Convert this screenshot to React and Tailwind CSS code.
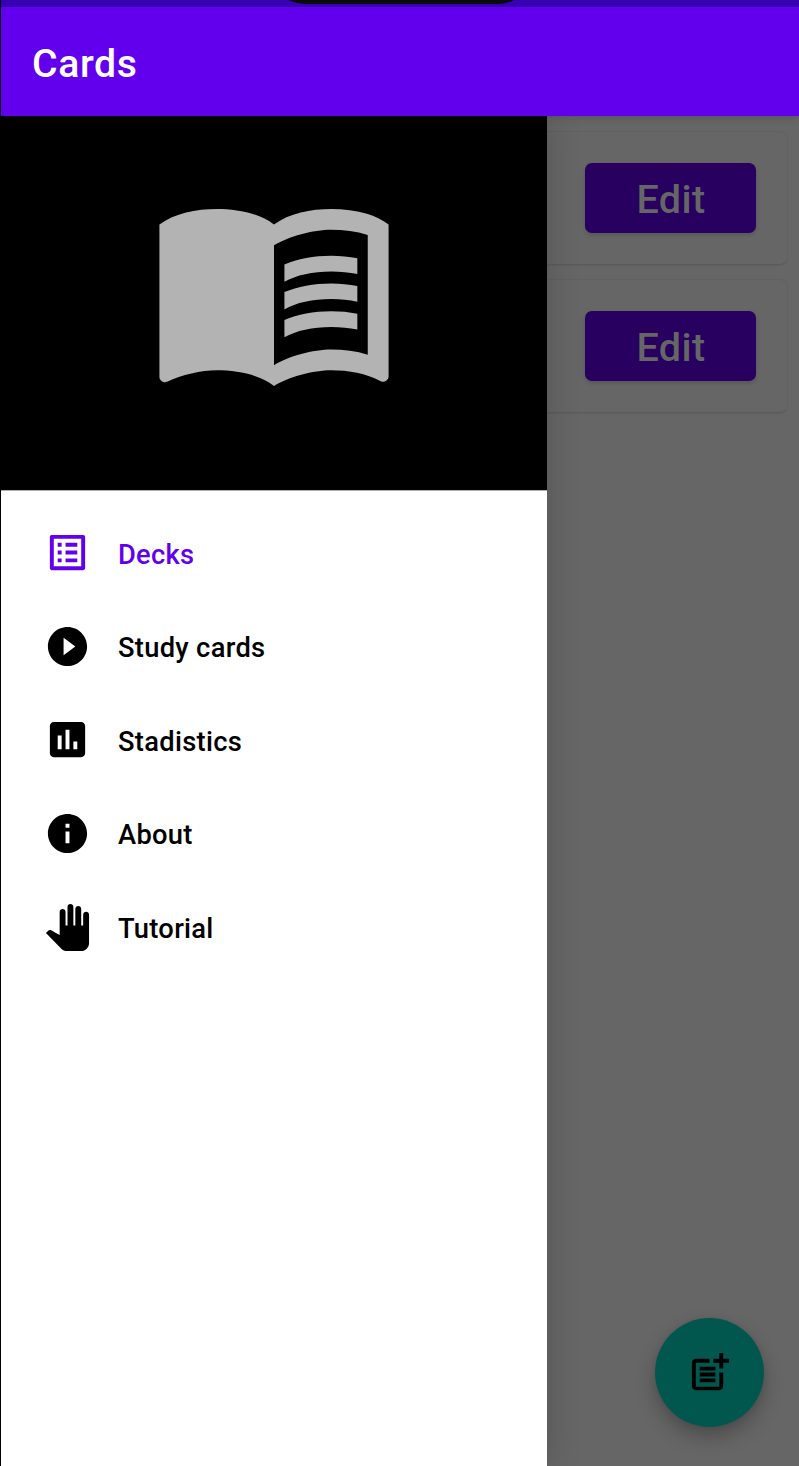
import { MdListAlt, MdPlayCircleFilled, MdAssessment, MdInfo, MdPanTool, MdPostAdd } from "react-icons/md";

const items = [
  { label: "Decks", Icon: MdListAlt, active: true },
  { label: "Study cards", Icon: MdPlayCircleFilled },
  { label: "Stadistics", Icon: MdAssessment },
  { label: "About", Icon: MdInfo },
  { label: "Tutorial", Icon: MdPanTool },
];

function BookIcon() {
  return (
    <svg viewBox="0 0 24 24" className="size-[250px] fill-[#b3b3b3]">
      <path d="M21 5c-1.11-.35-2.33-.5-3.5-.5-1.95 0-4.05.4-5.5 1.5-1.45-1.1-3.55-1.5-5.5-1.5S2.45 4.9 1 6v14.65c0 .25.25.5.5.5.1 0 .15-.05.25-.05C3.1 20.45 5.05 20 6.5 20c1.95 0 4.05.4 5.5 1.5 1.35-.85 3.8-1.5 5.5-1.5 1.65 0 3.35.3 4.75 1.05.1.05.15.05.25.05.25 0 .5-.25.5-.5V6c-.6-.45-1.25-.75-2-1zm0 13.5c-1.1-.35-2.3-.5-3.5-.5-1.7 0-4.15.65-5.5 1.5V8c1.35-.85 3.8-1.5 5.5-1.5 1.2 0 2.4.15 3.5.5v11.5z" />
      <path d="M17.5 10.5c.88 0 1.73.09 2.5.26V9.24c-.79-.15-1.64-.24-2.5-.24-1.7 0-3.24.29-4.5.83v1.66c1.13-.64 2.7-.99 4.5-.99zM13 12.49v1.66c1.13-.64 2.7-.99 4.5-.99.88 0 1.73.09 2.5.26V11.9c-.79-.15-1.64-.24-2.5-.24-1.7 0-3.24.3-4.5.83zM17.5 14.33c-1.7 0-3.24.29-4.5.83v1.66c1.13-.64 2.7-.99 4.5-.99.88 0 1.73.09 2.5.26v-1.52c-.79-.16-1.64-.24-2.5-.24z" />
    </svg>
  );
}

function DeckCard() {
  return (
    <div className="flex h-[134px] items-center justify-end rounded-lg border border-[#616161] border-b-[#5b5b5b] pr-[31px] shadow-[0_1px_1px_rgba(0,0,0,0.06)]">
      <button className="h-[70px] w-[171px] rounded-[7px] bg-[#270060] pt-[3px] pl-[1px] text-[39.5px] leading-none font-medium tracking-[0.4px] text-[#666666] shadow-[0_2px_4px_rgba(0,0,0,0.16)]">
        Edit
      </button>
    </div>
  );
}

export default function App() {
  return (
    <div className="flex h-[1466px] w-[799px] flex-col overflow-hidden border-l border-black bg-[#666666] font-[Roboto,sans-serif]">
      <div className="relative z-20 h-[7px] shrink-0 overflow-hidden bg-[#3700b3]">
        <div className="absolute bottom-[3px] left-[265px] h-[80px] w-[271px] rounded-[40px] bg-[#0a0a0a]" />
      </div>
      <header className="z-10 flex h-[109px] shrink-0 items-center bg-[#6200ee] pl-[31px] shadow-[0_2px_8px_rgba(0,0,0,0.15)]">
        <h1 className="pt-[6px] text-[39.2px] leading-none font-medium tracking-[0.6px] text-white">Cards</h1>
      </header>
      <main className="relative flex grow flex-col">
        <div className="flex flex-col gap-[14px] pt-[15px] pr-[11px] pl-[10px]">
          <DeckCard />
          <DeckCard />
        </div>
        <button className="absolute right-[35px] bottom-[39px] flex size-[109px] items-center justify-center rounded-full bg-[#01574e] text-black shadow-[0_10px_20px_rgba(0,0,0,0.25),0_1px_6px_rgba(0,0,0,0.08)]">
          <MdPostAdd className="size-[47px]" />
        </button>
        <aside className="absolute inset-y-0 left-0 flex w-[546px] flex-col bg-white shadow-[0_0_32px_rgba(0,0,0,0.18)]">
          <div className="flex h-[374px] items-start justify-center bg-black pt-[46px]">
            <BookIcon />
          </div>
          <nav className="flex flex-col border-t border-[#b0b0b0] pt-[15px]">
            {items.map(({ label, Icon, active }) => (
              <a
                key={label}
                className={`flex h-[93.6px] items-center gap-[27.2px] pl-[42.8px] ${active ? "text-[#6200ee]" : "text-black"}`}
              >
                <Icon className="size-[47px]" />
                <span className="pt-[4.8px] text-[27.3px] leading-none font-medium tracking-[0.3px]">{label}</span>
              </a>
            ))}
          </nav>
        </aside>
      </main>
    </div>
  );
}
